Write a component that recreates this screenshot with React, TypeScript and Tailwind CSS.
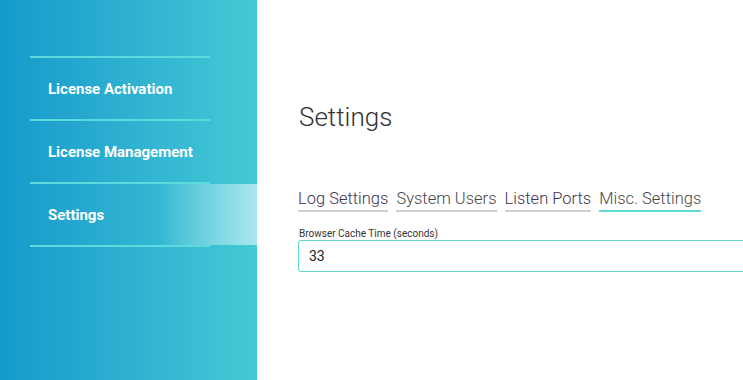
import React from 'react';

const navItems = ['License Activation', 'License Management', 'Settings'];
const tabs = [
    { label: 'Log Settings', color: 'text-[#452f4f]', line: 'border-[#cfcfcf]' },
    { label: 'System Users', color: 'text-[#474747]', line: 'border-[#cfcfcf]' },
    { label: 'Listen Ports', color: 'text-[#452f4f]', line: 'border-[#cfcfcf]' },
    { label: 'Misc. Settings', color: 'text-[#474747]', line: 'border-[#5fd8d8]' },
];

const App = () => {
    return (
        <div className="flex h-[380px] w-[743px] overflow-hidden bg-white font-['Roboto',sans-serif]">
            <aside className="w-[257px] shrink-0 bg-gradient-to-r from-[#1399cc] to-[#44c9d5] pt-[56px]">
                <div className="h-[2px] w-[180px] ml-[30px] bg-[#5ddadb]" />
                {navItems.map((item) => (
                    <div key={item}>
                        <div
                            className={
                                item === 'Settings'
                                    ? 'h-[61px] flex items-center pl-[48px] pt-[2px] text-[15px] font-bold text-white bg-gradient-to-r from-transparent from-[62%] to-[#a9e6ee]'
                                    : 'h-[61px] flex items-center pl-[48px] pt-[2px] text-[15px] font-bold text-white'
                            }
                        >
                            {item}
                        </div>
                        <div className="h-[2px] w-[180px] ml-[30px] bg-[#5ddadb]" />
                    </div>
                ))}
            </aside>
            <main className="flex-1 pl-[41px] pt-[101px] overflow-hidden">
                <h1 className="ml-[1px] text-[26px] font-light text-[#333] leading-[32px]">Settings</h1>
                <nav className="mt-[56px] flex gap-[8px] text-[16.5px] font-light leading-[20px]">
                    {tabs.map((t) => (
                        <span key={t.label} className={`${t.color} border-b-2 ${t.line} pb-[1px]`}>
                            {t.label}
                        </span>
                    ))}
                </nav>
                <label className="block mt-[16px] ml-[1px] text-[10px] text-[#333] leading-[11px]">
                    Browser Cache Time (seconds)
                </label>
                <div className="mt-[1px] w-[480px] h-[32px] border border-[#5fd8d8] rounded-[3px] flex items-center pl-[10px] text-[14px] text-[#222]">
                    33
                </div>
            </main>
        </div>
    );
};

export default App;
